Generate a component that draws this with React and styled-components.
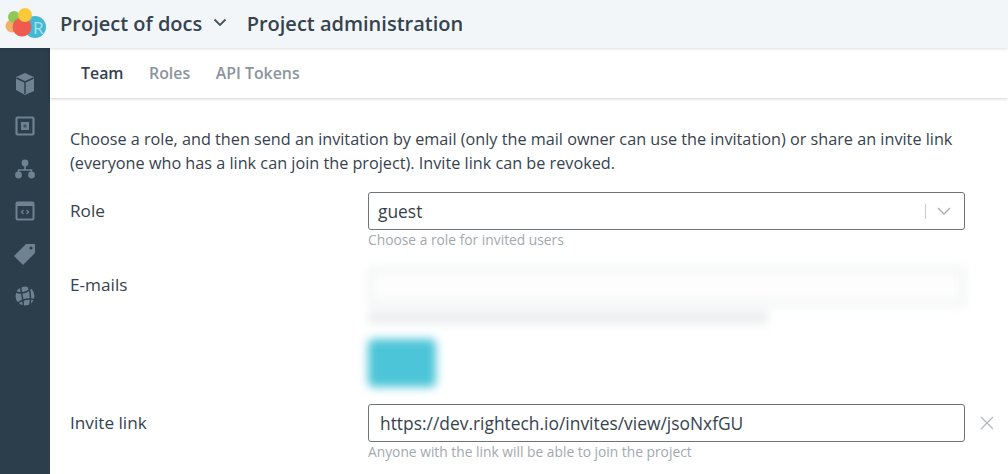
import React from 'react';
import styled, { createGlobalStyle } from 'styled-components';

const Global = createGlobalStyle`
  html, body { margin: 0; padding: 0; background: #fff; overflow: hidden; }
  body { font-family: "Open Sans", "Noto Sans", sans-serif; color: #2f3f4d; }
  * { box-sizing: border-box; }
`;
const Page = styled.div`width: 1008px; height: 474px; display: flex; flex-direction: column; overflow: hidden;`;
const Header = styled.header`
  height: 48px; flex: none; display: flex; align-items: center; background: #f3f6f8; position: relative; z-index: 3;
  box-shadow: 0 1px 3px rgba(0,0,0,.12);
`;
const LogoBox = styled.div`width: 60px; height: 48px; flex: none; display: flex;`;
const Title = styled.div`font-size: 20px; font-weight: 600; color: #35434f; line-height: 48px; white-space: nowrap;`;
const Chevron = styled.svg`width: 14px; height: 9px; margin: 0 19.4px 3px 11px; flex: none;`;
const Body = styled.div`flex: 1; display: flex; min-height: 0;`;
const Sidebar = styled.nav`
  width: 50px; flex: none; background: #2c3d4c; display: flex; flex-direction: column; align-items: center; padding-top: 22px; gap: 14.4px;
`;
const NavIcon = styled.svg`width: 24px; height: 28px; flex: none; color: #6f8291;`;
const Main = styled.main`flex: 1; min-width: 0; display: flex; flex-direction: column;`;
const Tabs = styled.div`
  height: 50px; flex: none; display: flex; align-items: center; gap: 25.5px; padding: 0 0 1px 31px; background: #fff;
  box-shadow: 0 1px 3px rgba(0,0,0,.18);
`;
const Tab = styled.span`font-size: 15.9px; font-weight: 600; color: ${p => p.$active ? '#35434f' : '#8b949c'};`;
const Content = styled.div`padding: 29px 0 0 20px; flex: 1;`;
const Intro = styled.p`margin: 0 0 17px; font-size: 16.23px; line-height: 24px; color: #36434f; width: 900px;`;
const Row = styled.div`display: grid; grid-template-columns: 298px 597px 44px; align-items: start;`;
const Label = styled.div`font-size: 17.2px; line-height: 38px; color: #36434f; margin-top: ${p => p.$top || 0}px;`;
const Field = styled.div`
  height: 38px; border: 1px solid #6f7479; border-radius: 3px; display: flex; align-items: center; padding-left: ${p => p.$pad}px;
  font-size: 17.4px; color: #36434f; background: #fff;
`;
const FieldText = styled.span`flex: 1;`;
const Sep = styled.span`width: 1px; height: 15px; background: #c8ccd0;`;
const Arrow = styled.svg`width: 14px; height: 8px; margin: 0 13px 0 11px;`;
const Hint = styled.div`font-size: 13.8px; line-height: 20px; color: #a3a9ae; white-space: nowrap;`;
const Blurred = styled.div`filter: blur(5px); margin-top: 18px; height: 136px;`;
const GhostField = styled.div`height: 38px; border: 4px solid #eef0f1; border-radius: 3px; background: #fdfdfd;`;
const GhostHint = styled.div`height: 13px; width: 400px; background: #eceeef; margin-top: 5px;`;
const GhostButton = styled.div`width: 68px; height: 48px; border-radius: 5px; background: #4cc5d8; margin-top: 15px;`;
const Close = styled.svg`width: 14px; height: 14px; margin: 12px 0 0 15px; color: #b4b9bd;`;
const LogoLetter = styled.text`font-family: "Open Sans", sans-serif; font-size: 17px; fill: #a9e2ee;`;

const Logo = () => (
  <svg width="50" height="48" viewBox="0 0 50 48">
    <circle cx="12" cy="26" r="6.5" fill="#f3b06a" />
    <circle cx="14" cy="17" r="6" fill="#8fc857" />
    <circle cx="35" cy="27" r="11" fill="#44b8d4" />
    <circle cx="22" cy="27" r="9.5" fill="#ef5b4e" />
    <circle cx="25" cy="15" r="7" fill="#f7c93b" />
    <LogoLetter x="33" y="34">R</LogoLetter>
  </svg>
);

export default function App() {
  return (
    <Page>
      <Global />
      <Header>
        <LogoBox><Logo /></LogoBox>
        <Title>Project of docs</Title>
        <Chevron viewBox="0 0 14 9"><path d="M1.5 1.5 7 7l5.5-5.5" stroke="#45525e" strokeWidth="1.8" fill="none" /></Chevron>
        <Title>Project administration</Title>
      </Header>
      <Body>
        <Sidebar>
          <NavIcon viewBox="0 0 24 28">
            <path d="M12 3 3 7v13l9 5 9-4V7z" fill="currentColor" />
            <path d="M3.5 8 12 12v12M12 12l8.5-4" stroke="#2c3d4c" strokeWidth="1.4" fill="none" />
          </NavIcon>
          <NavIcon viewBox="0 0 24 28">
            <rect x="3.5" y="5.5" width="17" height="17" rx="1" stroke="currentColor" strokeWidth="2.2" fill="none" />
            <rect x="8" y="10" width="8" height="8" fill="currentColor" />
            <rect x="10.5" y="12.5" width="3" height="3" fill="#3f5262" />
          </NavIcon>
          <NavIcon viewBox="0 0 24 28">
            <circle cx="12" cy="8" r="3.4" fill="currentColor" />
            <circle cx="5.5" cy="20" r="3.4" fill="currentColor" />
            <circle cx="18.5" cy="20" r="3.4" fill="currentColor" />
            <path d="M12 10v5M5.5 18v-3h13v3" stroke="currentColor" strokeWidth="1.6" fill="none" />
          </NavIcon>
          <NavIcon viewBox="0 0 24 28">
            <rect x="3.5" y="5.5" width="17" height="17" rx="1" stroke="currentColor" strokeWidth="2" fill="none" />
            <rect x="3" y="5" width="18" height="4" fill="currentColor" />
            <path d="M10.5 13 8.5 15l2 2M13.5 13l2 2-2 2" stroke="currentColor" strokeWidth="1.4" fill="none" />
          </NavIcon>
          <NavIcon viewBox="0 0 24 28">
            <path d="M13 4h9v9L10 25l-9-9z" fill="currentColor" />
            <circle cx="18" cy="8" r="1.6" fill="#2c3d4c" />
          </NavIcon>
          <NavIcon viewBox="0 0 24 28">
            <circle cx="12" cy="14" r="9.5" fill="currentColor" />
            <path d="M3 10c6 2 12 0 16-5M5 21c5-4 11-5 18-3M8 4c-1 6 3 13 2 20M15 4c3 6 3 12 2 19" stroke="#2c3d4c" strokeWidth="1.5" fill="none" />
          </NavIcon>
        </Sidebar>
        <Main>
          <Tabs>
            <Tab $active>Team</Tab>
            <Tab>Roles</Tab>
            <Tab>API Tokens</Tab>
          </Tabs>
          <Content>
            <Intro>Choose a role, and then send an invitation by email (only the mail owner can use the invitation) or share an invite link (everyone who has a link can join the project). Invite link can be revoked.</Intro>
            <Row>
              <Label>Role</Label>
              <div>
                <Field $pad={9}>
                  <FieldText>guest</FieldText>
                  <Sep />
                  <Arrow viewBox="0 0 14 8"><path d="M1 1l6 6 6-6" stroke="#a9aeb3" strokeWidth="1.3" fill="none" /></Arrow>
                </Field>
                <Hint>Choose a role for invited users</Hint>
              </div>
            </Row>
            <Row>
              <Label $top={16}>E-mails</Label>
              <Blurred>
                <GhostField />
                <GhostHint />
                <GhostButton />
              </Blurred>
            </Row>
            <Row>
              <Label>Invite link</Label>
              <div>
                <Field $pad={11}>
                  <FieldText>https://dev.rightech.io/invites/view/jsoNxfGU</FieldText>
                </Field>
                <Hint>Anyone with the link will be able to join the project</Hint>
              </div>
              <Close viewBox="0 0 14 14"><path d="M1 1l12 12M13 1 1 13" stroke="currentColor" strokeWidth="1.3" /></Close>
            </Row>
          </Content>
        </Main>
      </Body>
    </Page>
  );
}
